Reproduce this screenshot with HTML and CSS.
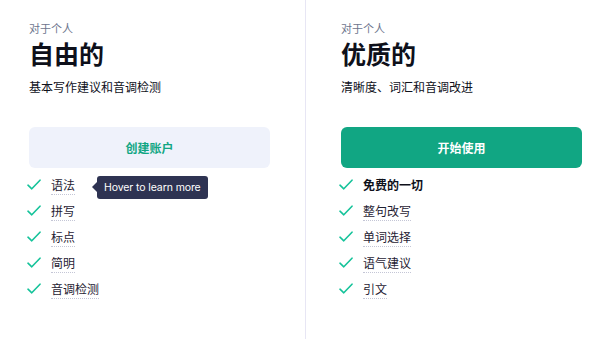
FILE: index.html
```html
<!DOCTYPE html>
<html lang="zh">
<head>
<meta charset="utf-8">
<link rel="stylesheet" href="styles.css">
</head>
<body>
<div class="plans">
  <section class="plan plan-free">
    <div class="label">对于个人</div>
    <h2 class="title">自由的</h2>
    <p class="desc">基本写作建议和音调检测</p>
    <a class="btn btn-light">创建账户</a>
    <ul class="features">
      <li class="feature">
        <svg class="check" viewBox="0 0 14 12"><path d="M1 6.2 L4.8 9.8 L13 1.2"/></svg>
        <span class="ftext">语法</span>
        <div class="tooltip">Hover to learn more</div>
      </li>
      <li class="feature">
        <svg class="check" viewBox="0 0 14 12"><path d="M1 6.2 L4.8 9.8 L13 1.2"/></svg>
        <span class="ftext">拼写</span>
      </li>
      <li class="feature">
        <svg class="check" viewBox="0 0 14 12"><path d="M1 6.2 L4.8 9.8 L13 1.2"/></svg>
        <span class="ftext">标点</span>
      </li>
      <li class="feature">
        <svg class="check" viewBox="0 0 14 12"><path d="M1 6.2 L4.8 9.8 L13 1.2"/></svg>
        <span class="ftext">简明</span>
      </li>
      <li class="feature">
        <svg class="check" viewBox="0 0 14 12"><path d="M1 6.2 L4.8 9.8 L13 1.2"/></svg>
        <span class="ftext">音调检测</span>
      </li>
    </ul>
  </section>
  <section class="plan plan-premium">
    <div class="label">对于个人</div>
    <h2 class="title">优质的</h2>
    <p class="desc">清晰度、词汇和音调改进</p>
    <a class="btn btn-green">开始使用</a>
    <ul class="features">
      <li class="feature">
        <svg class="check" viewBox="0 0 14 12"><path d="M1 6.2 L4.8 9.8 L13 1.2"/></svg>
        <span class="ftext ftext-bold">免费的一切</span>
      </li>
      <li class="feature">
        <svg class="check" viewBox="0 0 14 12"><path d="M1 6.2 L4.8 9.8 L13 1.2"/></svg>
        <span class="ftext">整句改写</span>
      </li>
      <li class="feature">
        <svg class="check" viewBox="0 0 14 12"><path d="M1 6.2 L4.8 9.8 L13 1.2"/></svg>
        <span class="ftext">单词选择</span>
      </li>
      <li class="feature">
        <svg class="check" viewBox="0 0 14 12"><path d="M1 6.2 L4.8 9.8 L13 1.2"/></svg>
        <span class="ftext">语气建议</span>
      </li>
      <li class="feature">
        <svg class="check" viewBox="0 0 14 12"><path d="M1 6.2 L4.8 9.8 L13 1.2"/></svg>
        <span class="ftext">引文</span>
      </li>
    </ul>
  </section>
</div>
</body>
</html>
```

FILE: styles.css
```css
* { box-sizing: border-box; }
html, body {
  margin: 0;
  padding: 0;
  background: #ffffff;
}
body {
  font-family: Inter, "Noto Sans CJK SC", sans-serif;
  color: #0e101a;
  width: 600px;
  height: 339px;
  overflow: hidden;
}
.plans {
  display: grid;
  grid-template-columns: 306px 1fr;
  height: 339px;
}
.plan {
  padding-top: 21px;
}
.plan-free {
  padding-left: 29px;
  padding-right: 36px;
  border-right: 1px solid #e7e6f4;
}
.plan-premium {
  padding-left: 35px;
  padding-right: 18px;
}
.label {
  font-size: 11px;
  line-height: 16px;
  color: #6d758d;
}
.title {
  margin: 2px 0 0;
  font-size: 25px;
  line-height: 32px;
  font-weight: 700;
  color: #0e101a;
}
.desc {
  margin: 8px 0 0;
  font-size: 12px;
  line-height: 18px;
  color: #0e101a;
}
.btn {
  display: flex;
  align-items: center;
  justify-content: center;
  margin-top: 30px;
  width: 241px;
  height: 41px;
  border-radius: 6px;
  font-size: 12px;
  font-weight: 700;
}
.btn-light {
  background: #eff2fb;
  color: #11a683;
}
.btn-green {
  background: #11a683;
  color: #ffffff;
}
.features {
  list-style: none;
  margin: 9px 0 0;
  padding: 0;
}
.feature {
  position: relative;
  display: flex;
  align-items: flex-start;
  height: 26px;
}
.check {
  width: 14px;
  height: 12px;
  margin-left: -2px;
  margin-top: 2px;
  margin-right: 10px;
  flex: none;
}
.check path {
  fill: none;
  stroke: #15c39a;
  stroke-width: 1.6;
  stroke-linecap: round;
  stroke-linejoin: round;
}
.ftext {
  font-size: 12px;
  line-height: 17px;
  color: #1f2233;
  border-bottom: 1px dotted #c4c6d6;
}
.ftext-bold {
  font-weight: 700;
  color: #0e101a;
  border-bottom-color: transparent;
}
.tooltip {
  position: absolute;
  left: 68px;
  top: -1px;
  height: 23px;
  padding: 0 7px;
  display: flex;
  align-items: center;
  background: #2e3352;
  color: #ffffff;
  font-size: 10.5px;
  letter-spacing: -0.1px;
  border-radius: 3px;
  white-space: nowrap;
}
.tooltip::before {
  content: "";
  position: absolute;
  left: -5px;
  top: 6px;
  border-style: solid;
  border-width: 5px 5px 5px 0;
  border-color: transparent #2e3352 transparent transparent;
}
```
